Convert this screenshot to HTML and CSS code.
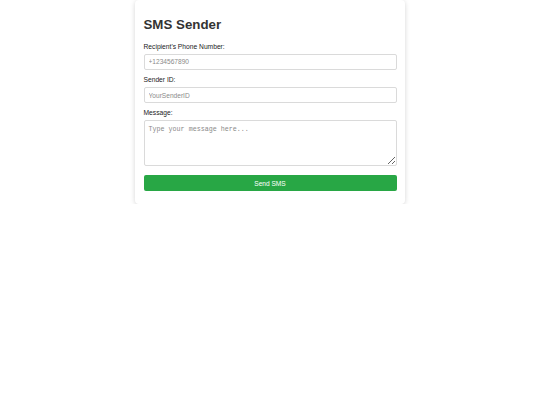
FILE: index.html
```html
<!DOCTYPE html>
<html lang="en">
<head>
<meta charset="utf-8">
<title>SMS Sender</title>
<link rel="stylesheet" href="styles.css">
</head>
<body>
  <div class="card">
    <h1 class="title">SMS Sender</h1>
    <form class="form">
      <label class="label" for="phone">Recipient's Phone Number:</label>
      <input class="field" id="phone" type="text" placeholder="+1234567890">
      <label class="label" for="sender">Sender ID:</label>
      <input class="field" id="sender" type="text" placeholder="YourSenderID">
      <label class="label" for="msg">Message:</label>
      <textarea class="area" id="msg" placeholder="Type your message here..."></textarea>
      <button class="send" type="button">Send SMS</button>
    </form>
  </div>
</body>
</html>
```

FILE: styles.css
```css
* { box-sizing: border-box; }

body {
  margin: 0;
  background: #fff;
  font-family: "Liberation Sans", Arial, sans-serif;
}

.card {
  width: 270px;
  margin: 0 auto;
  padding: 16.5px 8.5px 13px;
  background: #fff;
  border-radius: 4px;
  box-shadow: 0 1px 5px rgba(0, 0, 0, 0.17);
}

.title {
  margin: 0 0 10px;
  font-size: 13.3px;
  line-height: 16px;
  font-weight: bold;
  color: #333;
}

.form {
  display: flex;
  flex-direction: column;
}

.label {
  display: block;
  font-size: 6.7px;
  line-height: 8px;
  margin-bottom: 3.4px;
  color: #222;
}

.field {
  display: block;
  width: 100%;
  height: 16px;
  margin: 0 0 5.8px;
  padding: 0 4px;
  border: 1px solid #dadada;
  border-radius: 2px;
  font-family: "Liberation Sans", Arial, sans-serif;
  font-size: 6.6px;
  color: #333;
  background: #fff;
}

.field::placeholder { color: #8a8a8a; }

.area {
  display: block;
  width: 100%;
  height: 46px;
  margin: 0 0 9px;
  padding: 4px;
  border: 1px solid #dadada;
  border-radius: 2px;
  font-family: "Liberation Mono", "Courier New", monospace;
  font-size: 6.7px;
  line-height: 8px;
  resize: vertical;
}

.area::placeholder { color: #8a8a8a; }

.send {
  display: block;
  width: 100%;
  height: 16px;
  padding: 0;
  border: none;
  border-radius: 2px;
  background: #28a745;
  color: #fff;
  font-family: "Liberation Sans", Arial, sans-serif;
  font-size: 6.6px;
}
```
